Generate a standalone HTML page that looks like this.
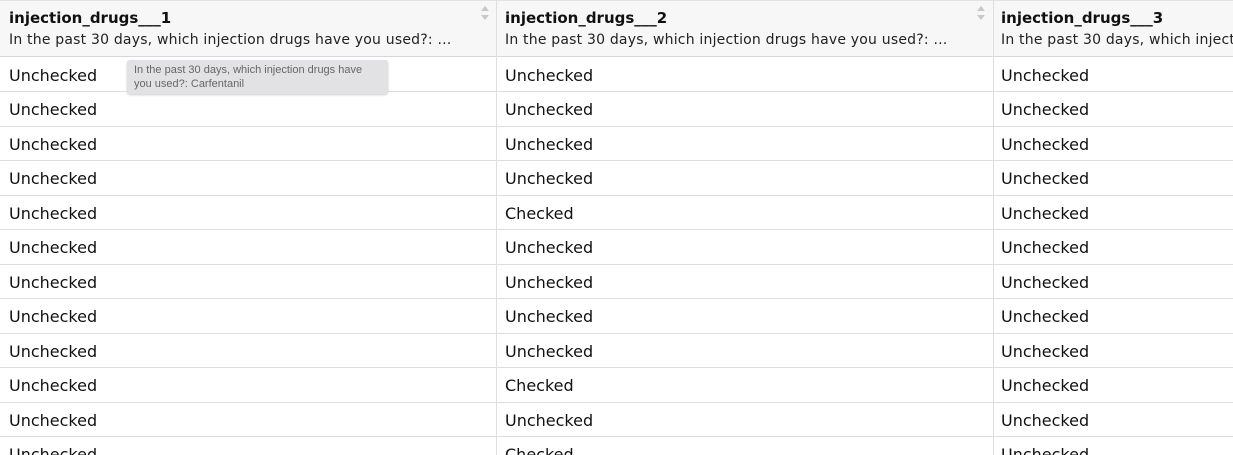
<!DOCTYPE html>
<html><head><style>
html,body{margin:0;padding:0;width:1233px;height:455px;overflow:hidden;background:#fff;font-family:"DejaVu Sans","Liberation Sans",sans-serif;color:#111;position:relative;}
.hdr{position:absolute;top:0;left:0;width:1233px;height:57px;background:#f7f7f8;border-top:1px solid #e3e3e3;box-sizing:border-box;border-bottom:1px solid #d8d8d8;}
.vl{position:absolute;top:0;width:1px;height:455px;background:#dedede;}
.hl{position:absolute;left:0;width:1233px;height:1px;background:#dedede;}
.t{position:absolute;font-size:15px;font-weight:bold;top:9px;white-space:nowrap;}
.s{position:absolute;font-size:14px;top:32px;white-space:nowrap;color:#222;letter-spacing:0.2px;overflow:hidden;}
.r{position:absolute;left:0;width:1233px;height:34px;font-size:16px;overflow:hidden;}
.r span{position:absolute;top:9px;white-space:nowrap;}
.r span:nth-child(1){left:9px}.r span:nth-child(2){left:505px}.r span:nth-child(3){left:1001px}
.sort{position:absolute;top:5px;width:10px;height:16px;}
.tip{position:absolute;left:127px;top:60px;width:261px;height:34px;background:#e2e2e4;border-radius:3px;box-shadow:0 1px 2px rgba(0,0,0,.2);font-family:"Liberation Sans",sans-serif;font-size:11px;color:#666;line-height:14px;padding:3px 7px;box-sizing:border-box;}
</style></head><body>
<div class="hdr"></div>
<div class="t" style="left:9px">injection_drugs___1</div>
<div class="s" style="left:9px">In the past 30 days, which injection drugs have you used?: …</div>
<div class="t" style="left:505px">injection_drugs___2</div>
<div class="s" style="left:505px">In the past 30 days, which injection drugs have you used?: …</div>
<div class="t" style="left:1001px">injection_drugs___3</div>
<div class="s" style="left:1001px;width:232px">In the past 30 days, which injection drugs have you used?: …</div>
<svg class="sort" style="left:480px" viewBox="0 0 10 16"><path d="M5 1L9 6H1Z M5 15L9 10H1Z" fill="#c8c8c8"/></svg>
<svg class="sort" style="left:976px" viewBox="0 0 10 16"><path d="M5 1L9 6H1Z M5 15L9 10H1Z" fill="#c8c8c8"/></svg>
<div class="hl" style="top:91px"></div>
<div class="hl" style="top:126px"></div>
<div class="hl" style="top:160px"></div>
<div class="hl" style="top:195px"></div>
<div class="hl" style="top:229px"></div>
<div class="hl" style="top:264px"></div>
<div class="hl" style="top:298px"></div>
<div class="hl" style="top:333px"></div>
<div class="hl" style="top:367px"></div>
<div class="hl" style="top:402px"></div>
<div class="hl" style="top:436px"></div>
<div class="vl" style="left:496px"></div>
<div class="vl" style="left:993px"></div>
<div class="r" style="top:57px"><span>Unchecked</span><span>Unchecked</span><span>Unchecked</span></div>
<div class="r" style="top:91px"><span>Unchecked</span><span>Unchecked</span><span>Unchecked</span></div>
<div class="r" style="top:126px"><span>Unchecked</span><span>Unchecked</span><span>Unchecked</span></div>
<div class="r" style="top:160px"><span>Unchecked</span><span>Unchecked</span><span>Unchecked</span></div>
<div class="r" style="top:195px"><span>Unchecked</span><span>Checked</span><span>Unchecked</span></div>
<div class="r" style="top:229px"><span>Unchecked</span><span>Unchecked</span><span>Unchecked</span></div>
<div class="r" style="top:264px"><span>Unchecked</span><span>Unchecked</span><span>Unchecked</span></div>
<div class="r" style="top:298px"><span>Unchecked</span><span>Unchecked</span><span>Unchecked</span></div>
<div class="r" style="top:333px"><span>Unchecked</span><span>Unchecked</span><span>Unchecked</span></div>
<div class="r" style="top:367px"><span>Unchecked</span><span>Checked</span><span>Unchecked</span></div>
<div class="r" style="top:402px"><span>Unchecked</span><span>Unchecked</span><span>Unchecked</span></div>
<div class="r" style="top:436px;height:19px"><span>Unchecked</span><span>Checked</span><span>Unchecked</span></div>
<div class="tip">In the past 30 days, which injection drugs have<br>you used?: Carfentanil</div>
</body></html>
